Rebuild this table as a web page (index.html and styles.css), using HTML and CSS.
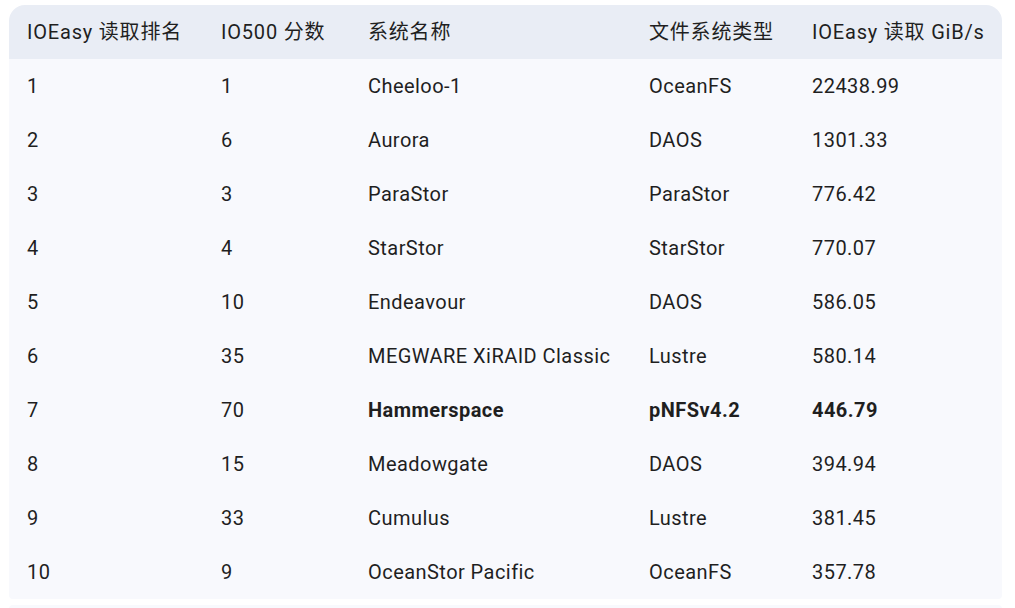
FILE: index.html
```html
<!DOCTYPE html>
<html lang="zh">
<head>
<meta charset="utf-8">
<link rel="stylesheet" href="styles.css">
</head>
<body>
<div class="wrap">
<table class="tbl">
<colgroup><col class="c1"><col class="c2"><col class="c3"><col class="c4"><col class="c5"></colgroup>
<thead>
<tr><th>IOEasy 读取排名</th><th>IO500 分数</th><th>系统名称</th><th>文件系统类型</th><th>IOEasy 读取 GiB/s</th></tr>
</thead>
<tbody>
<tr><td>1</td><td>1</td><td>Cheeloo-1</td><td>OceanFS</td><td>22438.99</td></tr>
<tr><td>2</td><td>6</td><td>Aurora</td><td>DAOS</td><td>1301.33</td></tr>
<tr><td>3</td><td>3</td><td>ParaStor</td><td>ParaStor</td><td>776.42</td></tr>
<tr><td>4</td><td>4</td><td>StarStor</td><td>StarStor</td><td>770.07</td></tr>
<tr><td>5</td><td>10</td><td>Endeavour</td><td>DAOS</td><td>586.05</td></tr>
<tr><td>6</td><td>35</td><td>MEGWARE XiRAID Classic</td><td>Lustre</td><td>580.14</td></tr>
<tr><td>7</td><td>70</td><td><b>Hammerspace</b></td><td><b>pNFSv4.2</b></td><td><b>446.79</b></td></tr>
<tr><td>8</td><td>15</td><td>Meadowgate</td><td>DAOS</td><td>394.94</td></tr>
<tr><td>9</td><td>33</td><td>Cumulus</td><td>Lustre</td><td>381.45</td></tr>
<tr><td>10</td><td>9</td><td>OceanStor Pacific</td><td>OceanFS</td><td>357.78</td></tr>
</tbody>
</table>
<div class="next"></div>
</div>
</body>
</html>
```
FILE: styles.css
```css
html, body { margin: 0; padding: 0; background: #ffffff; }
body { font-family: Roboto, "Noto Sans CJK SC", sans-serif; color: #1f1f1f; }
.wrap { padding: 5px 13px 0 9px; display: flex; flex-direction: column; gap: 6px; }
.tbl { border-collapse: separate; border-spacing: 0; width: 993px; table-layout: fixed; font-size: 20px; letter-spacing: 0.45px; border-radius: 16px 16px 4px 4px; overflow: hidden; }
.c1 { width: 194px; } .c2 { width: 147px; } .c3 { width: 281px; } .c4 { width: 163px; } .c5 { width: 208px; }
.tbl th { background: #e9edf5; text-align: left; font-weight: 400; letter-spacing: 0.8px; height: 54px; padding: 0 0 3px 18px; box-sizing: border-box; white-space: nowrap; }
.tbl td { background: #f8f9fd; height: 54px; padding: 0 0 0 18px; white-space: nowrap; }
.tbl b { font-weight: 700; }
.next { height: 20px; background: #f8f9fd; border-radius: 4px 4px 0 0; }
```
